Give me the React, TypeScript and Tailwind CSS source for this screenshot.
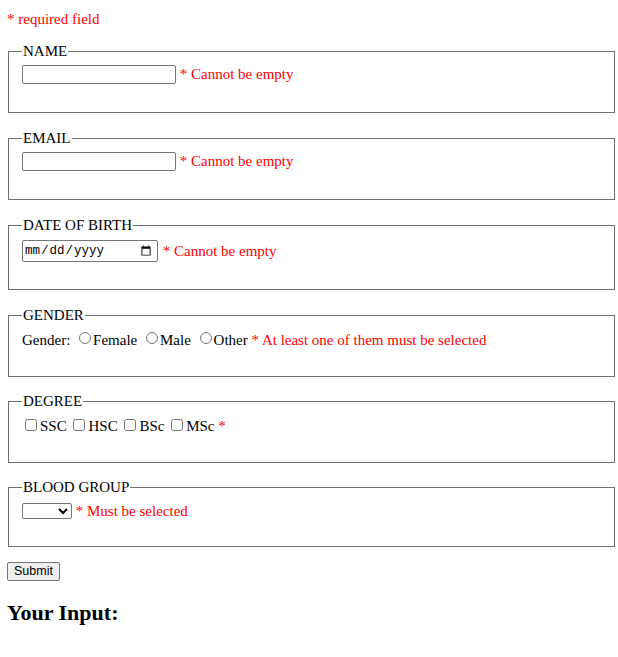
import React from 'react';

const Err = ({ children }: { children: React.ReactNode }) => <span className="text-[#ff0000]">{children}</span>;

const Box = ({ title, className, children }: { title: string; className: string; children: React.ReactNode }) => (
  <fieldset className={`ml-[8px] w-[607px] border border-[#707070] px-[13px] ${className}`}>
    <legend className="px-[1px] leading-[17px]">{title}</legend>
    {children}
  </fieldset>
);

const radio = 'w-[12px] h-[12px] ml-[5px] mr-[2px] align-[1px]';
const check = 'w-[12px] h-[12px] ml-[3px] mr-[3px] align-[0px]';

const App = () => {
  return (
    <div className="min-h-screen bg-white font-['Liberation_Serif',serif] text-[15px] leading-[17px] text-black">
      <p className="pl-[7px] pt-[11px] text-[#ff0000]">* required field</p>
      <form className="mt-[15px]">
        <Box title="NAME" className="pt-[5px] pb-[28px]">
          <div className="flex items-center h-[19px]">
            <input type="text" className="w-[154px] h-[19px] border border-[#767676] rounded-[2px] bg-white" />
            <Err>&nbsp;* Cannot be empty</Err>
          </div>
        </Box>

        <Box title="EMAIL" className="mt-[17px] pt-[5px] pb-[28px]">
          <div className="flex items-center h-[19px]">
            <input type="text" className="w-[154px] h-[19px] border border-[#767676] rounded-[2px] bg-white" />
            <Err>&nbsp;* Cannot be empty</Err>
          </div>
        </Box>

        <Box title="DATE OF BIRTH" className="mt-[17px] pt-[6px] pb-[27px]">
          <div className="flex items-center h-[22px]">
            <input
              type="date"
              className="w-[136px] h-[22px] border border-[#767676] rounded-[2px] bg-white pl-[1px] pr-[3px] font-['Liberation_Mono',monospace] text-[12.5px] leading-[16px]"
            />
            <span className="ml-[1px] text-[#ff0000]">&nbsp;* Cannot be empty</span>
          </div>
        </Box>

        <Box title="GENDER" className="mt-[17px] pt-[8px] pb-[27px]">
          <div className="h-[17px] whitespace-nowrap">
            Gender: <input type="radio" name="g" className={radio} />Female <input type="radio" name="g" className={radio} />Male{' '}
            <input type="radio" name="g" className={radio} />Other <Err>* At least one of them must be selected</Err>
          </div>
        </Box>

        <Box title="DEGREE" className="mt-[16px] pt-[8px] pb-[27px]">
          <div className="h-[17px] whitespace-nowrap">
            <input type="checkbox" className={check} />SSC <input type="checkbox" className={check} />HSC{' '}
            <input type="checkbox" className={check} />BSc <input type="checkbox" className={check} />MSc <Err>*</Err>
          </div>
        </Box>

        <Box title="BLOOD GROUP" className="mt-[16px] pt-[7px] pb-[27px]">
          <div className="flex items-center h-[16px]">
            <select className="w-[50px] h-[16px] border border-[#767676] rounded-[2px] bg-white text-[12px] leading-[14px]">
              <option value=""></option>
              <option>A+</option>
              <option>B+</option>
              <option>O+</option>
              <option>AB+</option>
            </select>
            <Err>&nbsp;* Must be selected</Err>
          </div>
        </Box>

        <div className="mt-[15px] pl-[7px]">
          <button
            type="submit"
            className="h-[19px] px-[6px] border border-[#767676] rounded-[2px] bg-[#efefef] font-['Liberation_Sans',Arial,sans-serif] text-[12.5px] leading-[15px] text-black"
          >
            Submit
          </button>
        </div>
      </form>
      <h2 className="mt-[19px] pl-[7px] text-[22px] leading-[26px] font-bold">Your Input:</h2>
    </div>
  );
};

export default App;
